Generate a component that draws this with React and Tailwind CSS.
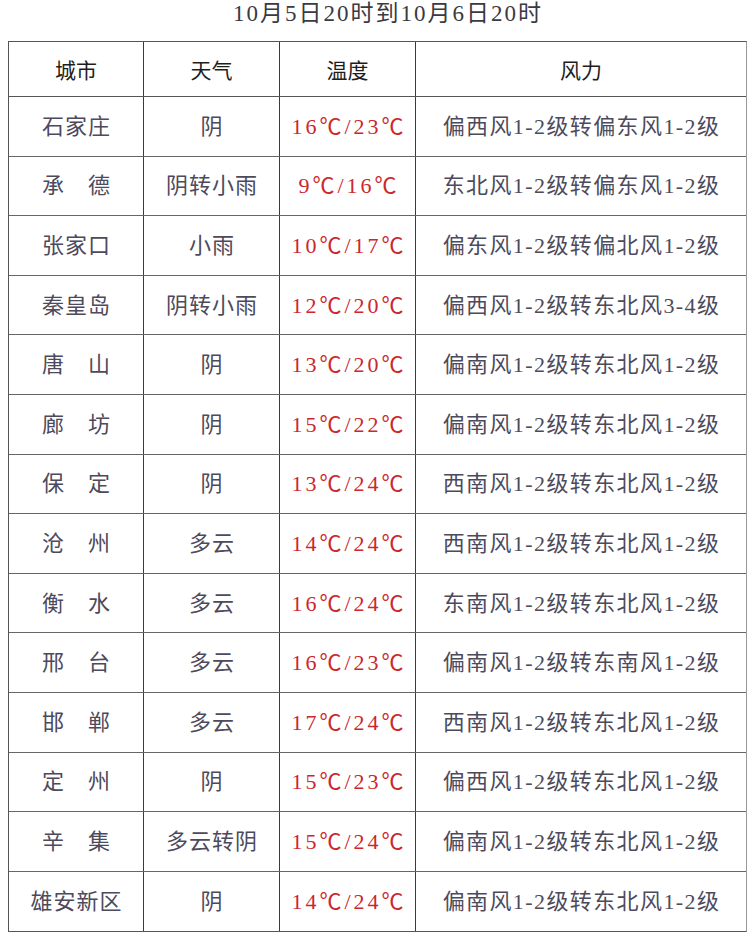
const ROWS = [
  ['石家庄', '阴', '16℃/23℃', '偏西风1-2级转偏东风1-2级'],
  ['承　德', '阴转小雨', '9℃/16℃', '东北风1-2级转偏东风1-2级'],
  ['张家口', '小雨', '10℃/17℃', '偏东风1-2级转偏北风1-2级'],
  ['秦皇岛', '阴转小雨', '12℃/20℃', '偏西风1-2级转东北风3-4级'],
  ['唐　山', '阴', '13℃/20℃', '偏南风1-2级转东北风1-2级'],
  ['廊　坊', '阴', '15℃/22℃', '偏南风1-2级转东北风1-2级'],
  ['保　定', '阴', '13℃/24℃', '西南风1-2级转东北风1-2级'],
  ['沧　州', '多云', '14℃/24℃', '西南风1-2级转东北风1-2级'],
  ['衡　水', '多云', '16℃/24℃', '东南风1-2级转东北风1-2级'],
  ['邢　台', '多云', '16℃/23℃', '偏南风1-2级转东南风1-2级'],
  ['邯　郸', '多云', '17℃/24℃', '西南风1-2级转东北风1-2级'],
  ['定　州', '阴', '15℃/23℃', '偏西风1-2级转东北风1-2级'],
  ['辛　集', '多云转阴', '15℃/24℃', '偏南风1-2级转东北风1-2级'],
  ['雄安新区', '阴', '14℃/24℃', '偏南风1-2级转东北风1-2级'],
];

const FONT = 'font-["Liberation_Serif","Noto_Sans_CJK_SC",serif]';

function Cell({ children, last, className = '' }) {
  return (
    <div
      className={`flex items-center justify-center ${
        last ? '' : 'border-r-[1.5px] border-r-[#3a3a3a]'
      } ${className}`}
    >
      {children}
    </div>
  );
}

export default function App() {
  return (
    <div className={`min-h-[939px] bg-white ${FONT}`}>
      <div className="flex h-[41px] items-start justify-center pl-[20px] pt-[1px]">
        <h1 className="text-[23px] leading-[26px] tracking-[2px] text-[#3a3a42]">
          10月5日20时到10月6日20时
        </h1>
      </div>

      <div className="ml-[8px] w-[739px] border border-[#555] border-r-[#999]">
        <div className="grid h-[55px] grid-cols-[135px_136px_136px_1fr] border-b-[1.5px] border-b-[#555] text-[21px] text-[#1e1e22]">
          <Cell className="pt-[5px]">城市</Cell>
          <Cell className="pt-[5px]">天气</Cell>
          <Cell className="pt-[5px]">温度</Cell>
          <Cell last className="pt-[5px]">
            风力
          </Cell>
        </div>

        {ROWS.map(([city, weather, temp, wind], i) => (
          <div
            key={city}
            className={`grid h-[59.6px] grid-cols-[135px_136px_136px_1fr] text-[22px] text-[#4d4a5c] ${
              i < ROWS.length - 1 ? 'border-b-[1.5px] border-b-[#666]' : ''
            }`}
          >
            <Cell className="tracking-[1px] pl-[1px]">{city}</Cell>
            <Cell className="tracking-[1px] pl-[1px]">{weather}</Cell>
            <Cell className="tracking-[3px] pl-[3px] text-[#cc272d]">{temp}</Cell>
            <Cell last className="tracking-[1.4px] pl-[1px]">
              {wind}
            </Cell>
          </div>
        ))}
      </div>
    </div>
  );
}
